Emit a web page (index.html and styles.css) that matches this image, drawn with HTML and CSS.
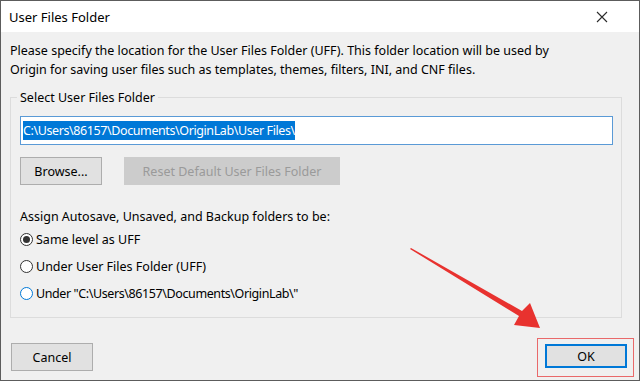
FILE: index.html
```html
<!DOCTYPE html>
<html>
  <head>
    <meta charset="utf-8" />
    <title>User Files Folder</title>
    <meta name="viewport" content="width=device-width, initial-scale=1" />
    <link rel="stylesheet" href="styles.css">
  </head>
  <body>
    <div class="window">
      <div class="titlebar">
        <span class="title">User Files Folder</span>
        <svg class="close" width="12" height="12" viewBox="0 0 12 12">
          <path d="M1 1 L11 11 M11 1 L1 11" stroke="#2b2b2b" stroke-width="1.1" fill="none" />
        </svg>
      </div>
      <div class="content">
        <p class="intro">Please specify the location for the User Files Folder (UFF). This folder location will be used by<br>Origin for saving user files such as templates, themes, filters, INI, and CNF files.</p>
        <div class="group">
          <span class="group-title">Select User Files Folder</span>
          <div class="path-box"><span class="selected">C:\Users\86157\Documents\OriginLab\User Files\</span></div>
          <div class="btn-row">
            <button class="btn browse">Browse...</button>
            <button class="btn reset" disabled>Reset Default User Files Folder</button>
          </div>
          <p class="assign">Assign Autosave, Unsaved, and Backup folders to be:</p>
          <div class="radio"><span class="dot checked"></span>Same level as UFF</div>
          <div class="radio"><span class="dot"></span>Under User Files Folder (UFF)</div>
          <div class="radio"><span class="dot hover"></span><span class="pathy">Under "C:\Users\86157\Documents\OriginLab\"</span></div>
        </div>
        <div class="footer">
          <button class="btn cancel">Cancel</button>
          <div class="mark">
            <button class="btn ok">OK</button>
          </div>
        </div>
      </div>
      <!-- annotation arrow -->
      <svg class="arrow" width="640" height="381" viewBox="0 0 640 381">
        <polygon points="410,249 411,248 522,311 530,303 540,328 514,325 519,316" fill="#e8322f" />
      </svg>
    </div>
  </body>
</html>
```

FILE: styles.css
```css
body {
  margin: 0;
  font-family: "Noto Sans", "Open Sans", sans-serif;
  font-size: 12.5px;
  color: #000;
}
.window {
  position: relative;
  width: 640px;
  height: 381px;
  box-sizing: border-box;
  border: 1px solid #5c5c5c;
  background: #f0f0f0;
  display: flex;
  flex-direction: column;
}
.titlebar {
  height: 31px;
  background: #fff;
  display: flex;
  align-items: center;
  justify-content: space-between;
  padding: 0 31px 0 8px;
}
.title {
  font-size: 13px;
}
.content {
  flex: 1;
  display: flex;
  flex-direction: column;
  padding: 9px 5px 0 9px;
}
.intro {
  margin: 0;
  line-height: 19px;
}
.group {
  margin-top: 18px;
  width: 612px;
  height: 221px;
  box-sizing: border-box;
  border: 1px solid #dcdcdc;
  padding: 0 8px 0 9px;
}
.group-title {
  display: inline-block;
  margin: -10px 0 0 -3px;
  padding: 0 3px;
  background: #f0f0f0;
  line-height: 19px;
  vertical-align: top;
}
.path-box {
  margin-top: 1px;
  height: 29px;
  box-sizing: border-box;
  border: 1px solid #5a9ad6;
  background: #fff;
  display: flex;
  align-items: center;
  padding-left: 2px;
}
.selected {
  background: #0078d7;
  color: #fff;
  line-height: 19px;
  letter-spacing: -0.4px;
}
.pathy {
  letter-spacing: -0.4px;
}
.btn {
  font-family: inherit;
  font-size: 12.5px;
  height: 28px;
  box-sizing: border-box;
  border: 1px solid #adadad;
  background: #e1e1e1;
  color: #000;
  padding: 0;
}
.btn-row {
  display: flex;
  gap: 22px;
  margin-top: 12px;
}
.browse {
  width: 82px;
}
.reset {
  width: 216px;
  border-color: #cccccc;
  background: #cccccc;
  color: #9a9a9a;
}
.assign {
  margin: 22px 0 0 0;
  line-height: 19px;
}
.radio {
  display: flex;
  align-items: center;
  height: 27px;
}
.radio:first-of-type {
  margin-top: 5px;
}
.dot {
  width: 13px;
  height: 13px;
  box-sizing: border-box;
  border: 1px solid #333;
  border-radius: 50%;
  background: #fff;
  margin-right: 3px;
  position: relative;
}
.dot.checked::after {
  content: "";
  position: absolute;
  left: 2px;
  top: 2px;
  width: 7px;
  height: 7px;
  border-radius: 50%;
  background: #333;
}
.dot.hover {
  border-color: #0078d7;
}
.footer {
  display: flex;
  justify-content: space-between;
  align-items: flex-start;
  margin-top: 20px;
}
.cancel {
  width: 82px;
  margin-left: 1px;
  margin-top: 5px;
}
.mark {
  border: 1.5px solid #e9696a;
  padding: 5px 6px 8px 7px;
}
.ok {
  width: 82px;
  height: 24px;
  border: 2px solid #0078d7;
}
.arrow {
  position: absolute;
  left: -1px;
  top: -1px;
  pointer-events: none;
}
```
